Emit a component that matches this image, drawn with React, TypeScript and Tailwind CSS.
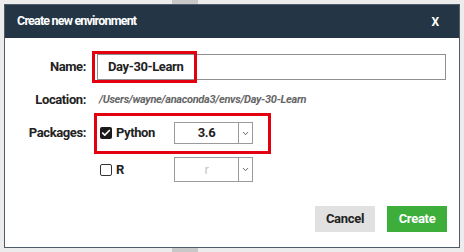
import { ChevronDown, Check } from "lucide-react";

function Select({ value, disabled }: { value: string; disabled?: boolean }) {
  return (
    <div className="flex h-full w-[79px] border border-[#9a9a9a] bg-white">
      <div
        className={
          "flex flex-1 items-center justify-center text-[13px] " +
          (disabled ? "font-normal text-[#c4c4c4]" : "font-bold text-[#222]")
        }
      >
        {value}
      </div>
      <div className="flex w-[14px] items-center justify-center border-l border-[#9a9a9a]">
        <ChevronDown size={9} strokeWidth={2.5} className="text-[#555]" />
      </div>
    </div>
  );
}

function Checkbox({ checked }: { checked?: boolean }) {
  return checked ? (
    <div className="flex h-[12px] w-[12px] items-center justify-center rounded-[2px] bg-[#1a1a1a]">
      <Check size={10} strokeWidth={4} className="text-white" />
    </div>
  ) : (
    <div className="h-[12px] w-[12px] rounded-[2px] border-[1.5px] border-[#333] bg-white" />
  );
}

export default function App() {
  return (
    <div
      className="relative h-[252px] w-[464px] overflow-hidden bg-[#ececec] p-[4px]"
      style={{ fontFamily: 'Roboto, "Open Sans", sans-serif' }}
    >
      <div className="absolute left-[172px] top-0 h-[4px] w-[26px] bg-[#c8c8c8]" />
      <div className="absolute bottom-0 left-[172px] h-[4px] w-[26px] bg-[#c8c8c8]" />
      <div className="flex h-[244px] flex-col border border-[#4d5c68] bg-white">
        <div className="flex h-[33px] items-center justify-between bg-[#243546] pl-[12px] pr-[20px] text-white">
          <span className="text-[12.5px] font-bold tracking-[-0.8px]">Create new environment</span>
          <span className="text-[12px] font-bold">X</span>
        </div>

        <div className="flex flex-col pt-[16px] text-[13px] tracking-[-0.4px] text-[#222]">
          <div className="flex h-[26px] items-center">
            <div className="w-[81px] text-right font-bold">Name:</div>
            <div className="relative ml-[11px] h-full w-[349px]">
              <div className="flex h-full items-center border border-[#8f8f8f] pl-[10px] font-bold">
                Day-30-Learn
              </div>
              <div className="absolute left-[-5px] top-[-3px] h-[32px] w-[105px] border-[3px] border-[#e3000f]" />
            </div>
          </div>

          <div className="mt-[10px] flex h-[20px] items-center">
            <div className="w-[81px] text-right font-bold">Location:</div>
            <div className="ml-[13px] text-[11px] font-bold italic tracking-[-0.3px] text-[#666]">
              /Users/wayne/anaconda3/envs/Day-30-Learn
            </div>
          </div>

          <div className="mt-[12px] flex h-[22px] items-center">
            <div className="w-[81px] text-right font-bold">Packages:</div>
            <div className="relative ml-[14px] flex h-full items-center">
              <Checkbox checked />
              <span className="ml-[4px] w-[58px] font-bold">Python</span>
              <Select value="3.6" />
              <div className="absolute left-[-6px] top-[-9px] h-[41px] w-[177px] border-[3px] border-[#e3000f]" />
            </div>
          </div>

          <div className="mt-[13px] flex h-[25px] items-center">
            <div className="w-[81px]" />
            <div className="ml-[14px] flex h-full items-center">
              <Checkbox />
              <span className="ml-[4px] w-[58px] font-bold">R</span>
              <Select value="r" disabled />
            </div>
          </div>
        </div>

        <div className="mt-auto flex justify-end gap-[12px] pb-[15px] pr-[12px] text-[13px] font-bold tracking-[-0.3px]">
          <button className="h-[26px] w-[60px] bg-[#e1e1e1] text-[#222]">Cancel</button>
          <button className="h-[26px] w-[60px] bg-[#3dae3a] text-white">Create</button>
        </div>
      </div>
    </div>
  );
}
